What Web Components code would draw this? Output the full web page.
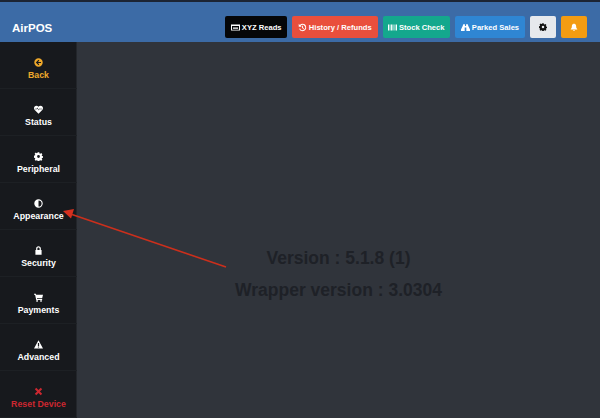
<!DOCTYPE html>
<html>
<head>
<meta charset="utf-8">
<title>AirPOS</title>
<style>
  html, body { margin: 0; height: 100%; }
  body { font-family: "Liberation Sans", Arial, sans-serif; overflow: hidden; background: #30343b; }
</style>
</head>
<body>
<pos-app>
  <pos-header slot="header">
    <pos-button color="#050608" ink="#fff" icon="reads">XYZ Reads</pos-button>
    <pos-button color="#e94f3c" icon="history">History / Refunds</pos-button>
    <pos-button color="#14a88d" icon="barcode">Stock Check</pos-button>
    <pos-button color="#2f86d3" icon="binoculars">Parked Sales</pos-button>
    <pos-button color="#e6e9ed" ink="#111" icon="gear" square></pos-button>
    <pos-button color="#f39c12" icon="bell" square></pos-button>
  </pos-header>
  <pos-sidebar slot="sidebar">
    <pos-nav-item icon="back" ink="#f0a92b">Back</pos-nav-item>
    <pos-nav-item icon="heart">Status</pos-nav-item>
    <pos-nav-item icon="gear">Peripheral</pos-nav-item>
    <pos-nav-item icon="contrast">Appearance</pos-nav-item>
    <pos-nav-item icon="lock">Security</pos-nav-item>
    <pos-nav-item icon="cart">Payments</pos-nav-item>
    <pos-nav-item icon="warning">Advanced</pos-nav-item>
    <pos-nav-item icon="cross" ink="#cc2730">Reset Device</pos-nav-item>
  </pos-sidebar>
  <pos-version>
    <div>Version : 5.1.8 (1)</div>
    <div>Wrapper version : 3.0304</div>
  </pos-version>
</pos-app>

<script>
  // all icons on a 16 x 16 grid, filled with currentColor
  const ICONS = {
    reads: `<path fill-rule="evenodd" d="M0 2.500h16v11H0zM1.800 5.500v6.500h12.400V5.500z"/><path d="M3.500 7h9v1.200h-9zM3.500 9.300h9v1.200h-9z"/>`,
    history: `<path d="M8 1.500a6.500 6.500 0 1 1-6.100 8.800l1.900-.7A4.500 4.500 0 1 0 4.800 5L6.500 6.700H1.300V1.500L3.300 3.500A6.500 6.500 0 0 1 8 1.500z"/><path d="M7.200 4.800h1.600v3.300l2.100 1.500-.9 1.200-2.800-2z"/>`,
    barcode: `<path d="M0 2.500h2v11H0zM3 2.500h1v11H3zM5 2.500h2v11H5zM8 2.500h1v11H8zM10 2.500h1v11h-1zM12 2.500h1v11h-1zM14 2.500h2v11h-2z"/>`,
    binoculars: `<path d="M4 2h3v3.500h2V2h3l1 3.500 3 6V14H9.500V8h-3v6H0v-2.500l3-6z"/>`,
    gear: `<path fill-rule="evenodd" d="M6.600 .5h2.800l.4 2 1.300.6 1.800-1.200 2 2-1.200 1.800.6 1.300 2 .4v2.800l-2 .4-.6 1.300 1.200 1.800-2 2-1.800-1.200-1.300.6-.4 2H6.600l-.4-2-1.300-.6-1.800 1.200-2-2 1.200-1.800-.6-1.300-2-.4V6.400l2-.4.6-1.300-1.200-1.800 2-2 1.800 1.200 1.300-.6zM8 5.500a2.500 2.500 0 1 0 0 5 2.500 2.500 0 0 0 0-5z"/>`,
    bell: `<path d="M8 .8c.8 0 1.300.5 1.300 1.200 2.200.6 3 2.300 3 4.300 0 3 .8 4.400 2.200 5.800v1.100h-13v-1.100c1.400-1.400 2.200-2.800 2.200-5.800 0-2 .8-3.700 3-4.300C6.700 1.300 7.200.8 8 .8zM6.300 14h3.400a1.700 1.700 0 0 1-3.400 0z"/>`,
    back: `<path fill-rule="evenodd" d="M8 .5a7.500 7.500 0 1 1 0 15 7.500 7.500 0 0 1 0-15zM8 3.200 3.200 8 8 12.800l1.400-1.400-2.300-2.300h5.400V6.900H7.100l2.300-2.300z"/>`,
    heart: `<path fill-rule="evenodd" d="M8 15.500 1.300 8.800C.4 7.800 0 6.700 0 5.500 0 3 1.900 1.300 4.200 1.300c1.600 0 2.900.8 3.800 2 .9-1.200 2.200-2 3.800-2C14.100 1.300 16 3 16 5.500c0 1.200-.4 2.300-1.300 3.300zM1.800 7.700h3.600l.9-1.500 1.700 3.600 1.400-2.400.4.300h4.400V6.500h-4l-.5-.4L8 8.300 6.100 4.300 4.800 6.500h-3z"/>`,
    contrast: `<path fill-rule="evenodd" d="M8 .5a7.500 7.500 0 1 1 0 15 7.500 7.500 0 0 1 0-15zm0 2v11a5.500 5.500 0 0 0 0-11z"/>`,
    lock: `<path fill-rule="evenodd" d="M8 .5c2.400 0 4.200 1.700 4.200 4.100V7h1.300v8.500h-11V7h1.300V4.600C3.800 2.200 5.600.5 8 .5zm0 2.200c-1.200 0-2 .8-2 2V7h4V4.700c0-1.200-.8-2-2-2z"/>`,
    cart: `<path d="M0 1.500h3.300l.5 1.700H16l-1.500 6.300H5.200l.3 1.300h9v1.600H4L1.900 3.200H0z"/><circle cx="5.500" cy="14" r="1.500"/><circle cx="12.500" cy="14" r="1.500"/>`,
    warning: `<path fill-rule="evenodd" d="M8 .5l8 14.500H0zM6.900 5.500v5.300h2.200V5.500zM6.900 11.600v1.900h2.200v-1.900z"/>`,
    cross: `<path d="M4 1.500 8 5.500l4-4L14.500 4l-4 4 4 4-2.500 2.500-4-4-4 4L1.500 12l4-4-4-4z"/>`
  };

  function iconSvg(name, size) {
    return `<svg viewBox="0 0 16 16" width="${size}" height="${size}" fill="currentColor" aria-hidden="true">${ICONS[name] || ""}</svg>`;
  }

  class PosApp extends HTMLElement {
    constructor() {
      super();
      this.attachShadow({ mode: "open" });
      this.shadowRoot.innerHTML = `
        <style>
          :host { display: grid; grid-template-columns: 77px 1fr; grid-template-rows: 42px 1fr; width: 600px; height: 418px; position: relative; overflow: hidden; }
          ::slotted([slot="header"]) { grid-column: 1 / 3; }
          #arrow { position: absolute; left: 0; top: 0; pointer-events: none; }
        </style>
        <slot name="header"></slot>
        <slot name="sidebar"></slot>
        <slot></slot>
        <svg id="arrow" width="600" height="418">
          <path d="M226 267 72 214.500" stroke="#cb2f1c" stroke-width="1.600" fill="none"/>
          <path d="M63 211 74 209 71 218.500z" fill="#d5301f"/>
        </svg>
      `;
    }
  }

  class PosHeader extends HTMLElement {
    constructor() {
      super();
      this.attachShadow({ mode: "open" });
      this.shadowRoot.innerHTML = `
        <style>
          :host { display: flex; align-items: center; box-sizing: border-box; height: 42px; background: #3c6ba6; border-top: 2px solid #1c2433; padding: 0 13px 0 12px; }
          #brand { font-size: 11.500px; font-weight: bold; color: #fff; margin-top: 11px; }
          #actions { margin-left: auto; margin-top: 10px; display: flex; gap: 5px; }
        </style>
        <div id="brand">AirPOS</div>
        <div id="actions"><slot></slot></div>
      `;
    }
  }

  class PosButton extends HTMLElement {
    constructor() {
      super();
      this.attachShadow({ mode: "open" });
      const icon = this.getAttribute("icon");
      const square = this.hasAttribute("square");
      this.shadowRoot.innerHTML = `
        <style>
          :host { display: inline-flex; align-items: center; justify-content: center; gap: 1.500px; box-sizing: border-box; height: 22px; padding: 0 ${square ? "0" : "5.900px"}; ${square ? "width: 26px;" : ""} border-radius: 2px; font-size: 7.600px; font-weight: bold; white-space: nowrap; background: ${this.getAttribute("color")}; color: ${this.getAttribute("ink") || "#fff"}; }
          svg { flex: none; }
        </style>
        ${iconSvg(icon, square ? 8 : 9)}<slot></slot>
      `;
    }
  }

  class PosSidebar extends HTMLElement {
    constructor() {
      super();
      this.attachShadow({ mode: "open" });
      this.shadowRoot.innerHTML = `
        <style>
          :host { display: flex; flex-direction: column; background: #17191d; box-shadow: inset -1px 0 0 #23262b; }
        </style>
        <slot></slot>
      `;
    }
  }

  class PosNavItem extends HTMLElement {
    constructor() {
      super();
      this.attachShadow({ mode: "open" });
      this.shadowRoot.innerHTML = `
        <style>
          :host { display: flex; flex-direction: column; align-items: center; box-sizing: border-box; height: 47px; padding-top: 16px; border-bottom: 1px solid #1d2024; font-size: 8.800px; font-weight: bold; white-space: nowrap; color: ${this.getAttribute("ink") || "#fff"}; }
          svg { display: block; margin-bottom: 3px; }
        </style>
        ${iconSvg(this.getAttribute("icon"), 9)}<slot></slot>
      `;
    }
  }

  class PosVersion extends HTMLElement {
    constructor() {
      super();
      this.attachShadow({ mode: "open" });
      this.shadowRoot.innerHTML = `
        <style>
          :host { display: flex; flex-direction: column; align-items: center; padding-top: 206px; background: #30343b; color: #1e2127; font-size: 17.500px; font-weight: bold; line-height: 20px; }
          ::slotted(div) { margin-bottom: 12px; }
        </style>
        <slot></slot>
      `;
    }
  }

  customElements.define("pos-app", PosApp);
  customElements.define("pos-header", PosHeader);
  customElements.define("pos-button", PosButton);
  customElements.define("pos-sidebar", PosSidebar);
  customElements.define("pos-nav-item", PosNavItem);
  customElements.define("pos-version", PosVersion);
</script>
</body>
</html>
